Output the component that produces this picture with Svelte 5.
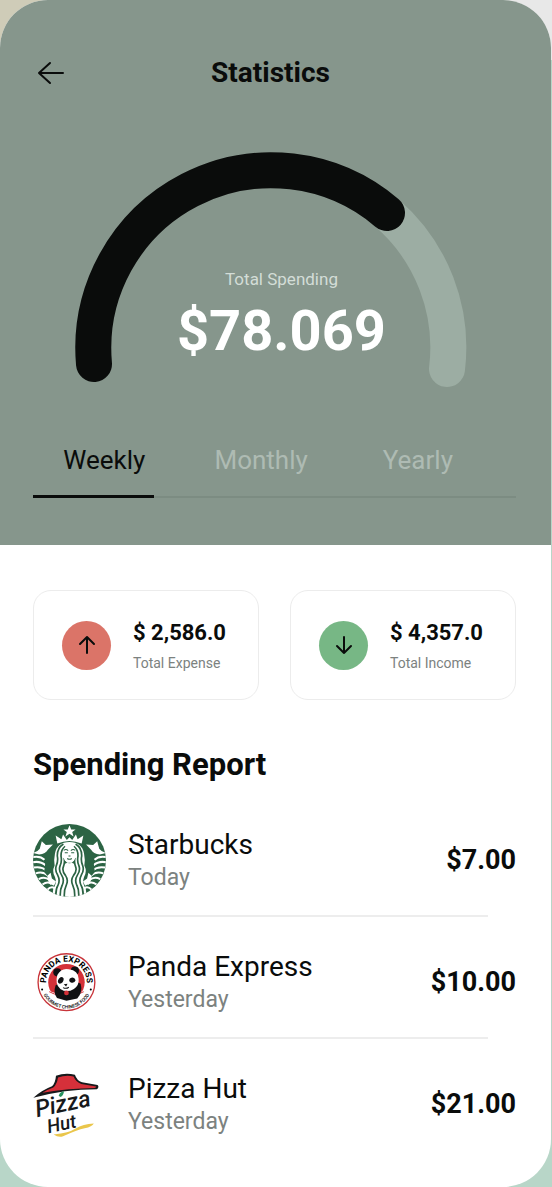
<script>
    let period = $state("Weekly");

    const periods = ["Weekly", "Monthly", "Yearly"];

    const totals = [
        { label: "Total Expense", amount: "$ 2,586.0", type: "expense" },
        { label: "Total Income", amount: "$ 4,357.0", type: "income" },
    ];

    const spendings = [
        { name: "Starbucks", day: "Today", price: "$7.00" },
        { name: "Panda Express", day: "Yesterday", price: "$10.00" },
        { name: "Pizza Hut", day: "Yesterday", price: "$21.00" },
    ];
</script>

{#snippet starbucks()}
    <svg class="logo" viewBox="0 0 216 216" aria-hidden="true">
        <defs>
            <clipPath id="siren-clip"><circle cx="108" cy="108" r="108" /></clipPath>
        </defs>
        <g clip-path="url(#siren-clip)">
            <rect width="216" height="216" fill="#2c6444" />
            <g fill="#fff">
                <path d="M108 4l5 12h13l-10 8 4 13-12-8-12 8 4-13-10-8h13z" />
                <path d="M67 34l17 11 5-14 11 16 8-8 8 8 11-16 5 14 17-11-5 24q-37-15-72 0z" />
                <path d="M26 51l12 11 21-1-15 15q-6 12-26 14l-18-4q14-4 20-13zM190 51l-12 11-21-1 15 15q6 12 26 14l18-4q-14-4-20-13z" />
            </g>
            <!-- split tails -->
            <g fill="none" stroke="#fff" stroke-width="6">
                <path d="M0 98q22-4 34 8M0 113q22-4 37 9M2 129q22-5 39 9M8 146q21-7 37 7M17 163q18-9 32 3M28 179q16-11 27-1M42 195q12-13 22-5M216 98q-22-4-34 8M216 113q-22-4-37 9M214 129q-22-5-39 9M208 146q-21-7-37 7M199 163q-18-9-32 3M188 179q-16-11-27-1M174 195q-12-13-22-5" />
            </g>
            <path d="M35 94q3 24-2 48l24 28 7-22-9-24zM181 94q-3 24 2 48l-24 28-7-22 9-24z" fill="#2c6444" />
            <path d="M42 154l10-10 4 17 12 9-6 13-15-8zM174 154l-10-10-4 17-12 9 6 13 15-8z" fill="#fff" />
            <!-- hair and body -->
            <path d="M108 53q-37 1-43 34-4 19-1 36-9 18 1 34 7 18-5 34l-3 25h102l-3-25q-12-16-5-34 10-16 1-34 3-17-1-36-6-33-43-34z" fill="#fff" />
            <g fill="none" stroke="#2c6444" stroke-width="5">
                <path d="M90 59q-19 12-18 36 3 14-3 28-5 15 4 28 8 15 1 30-8 13-6 38M95 66q-13 10-12 30 3 15-3 28-5 14 5 28 9 14 1 30-7 13-5 38M92 100q3 14-2 26-5 12 6 26 10 14 2 30-7 14-5 38" />
                <path d="M126 59q19 12 18 36-3 14 3 28 5 15-4 28-8 15-1 30 8 13 6 38M121 66q13 10 12 30-3 15 3 28 5 14-5 28-9 14-1 30 7 13 5 38M124 100q-3 14 2 26 5 12-6 26-10 14-2 30 7 14 5 38" />
            </g>
            <ellipse cx="108" cy="89" rx="20" ry="26" fill="#fff" />
            <path d="M93 107q15 18 30 0l2 12q-17-8-34 0z" fill="#2c6444" />
            <path d="M91 78q7-5 13 1M112 79q6-6 13-1M94 85h9M113 85h9M105 95h6M101 102q7 5 14 0" fill="none" stroke="#2c6444" stroke-width="3" />
        </g>
    </svg>
{/snippet}

{#snippet panda()}
    <svg class="logo" viewBox="9 2 216 216" aria-hidden="true">
        <defs>
            <path id="panda-top" d="M52 130A60 60 0 1 1 164 130" />
            <path id="panda-bottom" d="M31 110a77 77 0 0 0 154 0" />
        </defs>
        <circle cx="108" cy="109" r="84" fill="#fff" stroke="#c8343a" stroke-width="4" />
        <circle cx="108" cy="109" r="54" fill="#d43138" />
        <path d="M52 132q56 28 112 0-12 33-56 35-44-2-56-35z" fill="#fff" />
        <path d="M57 137q51 28 102 0" fill="none" stroke="#d43138" stroke-width="3" />
        <path d="M76 118q-8 22 4 38l28 8 32-7q17-17 10-43l-30-16z" fill="#101113" />
        <circle cx="81" cy="80" r="12" fill="#101113" />
        <circle cx="133" cy="75" r="12" fill="#101113" />
        <path d="M81 88q12-22 34-17 28 4 29 28 2 20-14 30-21 13-40 0-17-13-9-41z" fill="#fff" />
        <path d="M86 98q10-9 14 1-1 13-12 15-10-5-2-16zM118 98q13-7 17 5-4 11-14 7-8-5-3-12z" fill="#101113" />
        <path d="M100 115l11-1-4 8z" fill="#101113" />
        <path d="M98 125q9 5 17-1" fill="none" stroke="#101113" stroke-width="3" />
        <circle cx="108" cy="141" r="7" fill="#d43138" />
        <circle cx="36" cy="131" r="3" />
        <circle cx="180" cy="131" r="3" />
        <text class="ring-name"><textPath href="#panda-top" startOffset="50%">PANDA EXPRESS</textPath></text>
        <text class="ring-sub"><textPath href="#panda-bottom" startOffset="50%">GOURMET CHINESE FOOD</textPath></text>
    </svg>
{/snippet}

{#snippet pizza()}
    <svg class="logo" viewBox="0 0 216 216" aria-hidden="true">
        <path d="M1 88q24-22 55-34 10-8 12-31 27-10 56-3 6 18 21 22l46 8q6 6-2 13-95 0-188 25z" fill="#17191b" />
        <path d="M28 73q16-9 32-15 11-10 14-30 23-8 46-3 7 17 23 22l44 8q2 3-5 4-76 1-154 14z" fill="#d6303a" />
        <path d="M61 197q46-5 65-18 22-13 54-15-5 10-27 14-22 4-64 24-13 5-28-5z" fill="#eac64b" />
        <text class="hut-text" transform="translate(12 146) rotate(-12)">Pizza</text>
        <text class="hut-text small" transform="translate(46 193) rotate(-12)">Hut</text>
        <path d="M76 82q4-12 16-13-2 13-11 17z" fill="#27935f" />
    </svg>
{/snippet}

<div class="screen">
    <main class="phone">
        <section class="overview">
            <header class="topbar">
                <button class="back-btn" aria-label="Back">
                    <svg viewBox="0 0 28 24" width="28" height="24">
                        <path d="M13 2L2 12l11 10M2 12h24" />
                    </svg>
                </button>
                <h1>Statistics</h1>
            </header>

            <div class="gauge">
                <svg class="gauge-arc" viewBox="0 0 392 236" aria-hidden="true">
                    <path class="track" d="M312 60A178 178 0 0 1 372 216" />
                    <path class="fill" d="M19 211A178 178 0 0 1 312 60" />
                </svg>
                <div class="gauge-text">
                    <span class="gauge-label">Total Spending</span>
                    <strong>$78.069</strong>
                </div>
            </div>

            <div class="tabs" role="tablist">
                {#each periods as item}
                    <button
                        role="tab"
                        class="tab"
                        class:active={period === item}
                        aria-selected={period === item}
                        onclick={() => (period = item)}
                    >
                        {item}
                    </button>
                {/each}
            </div>
        </section>

        <section class="totals">
            {#each totals as total}
                <div class="total-card">
                    <span class="badge {total.type}">
                        <svg viewBox="0 0 18 20" width="18" height="20" aria-hidden="true">
                            {#if total.type === "expense"}
                                <path d="M9 18V2M2 9l7-7 7 7" />
                            {:else}
                                <path d="M9 2v16M2 11l7 7 7-7" />
                            {/if}
                        </svg>
                    </span>
                    <div class="total-text">
                        <strong>{total.amount}</strong>
                        <span>{total.label}</span>
                    </div>
                </div>
            {/each}
        </section>

        <section class="report">
            <h2>Spending Report</h2>
            <ul>
                {#each spendings as item}
                    <li>
                        {#if item.name === "Starbucks"}
                            {@render starbucks()}
                        {:else if item.name === "Panda Express"}
                            {@render panda()}
                        {:else}
                            {@render pizza()}
                        {/if}
                        <div class="item-text">
                            <span class="name">{item.name}</span>
                            <span class="day">{item.day}</span>
                        </div>
                        <strong class="price">{item.price}</strong>
                    </li>
                {/each}
            </ul>
        </section>
    </main>
</div>

<style>
    :global(body) {
        background: #b8d6c8;
    }

    .screen {
        padding-right: 1px;
        background: linear-gradient(90deg, #cfccb8 50%, #e8e8e8 50%) top / 100% 60px no-repeat;
        font-family: Roboto, "Noto Sans", sans-serif;
        color: #0a0c0b;
    }

    .phone {
        background: white;
        border-radius: 48px;
        overflow: hidden;
    }

    button {
        padding: 0;
        border: none;
        background: none;
        font: inherit;
        cursor: pointer;
    }

    h1,
    h2,
    ul {
        margin: 0;
        padding: 0;
    }

    .overview {
        padding: 52px 35px 47px 33px;
        background: #86968c;
    }

    .topbar {
        display: grid;
        grid-template-columns: 36px 1fr 44px;
        align-items: center;
        height: 41px;
    }

    .back-btn {
        display: flex;
        padding-left: 4px;
    }

    .back-btn path,
    .badge path {
        fill: none;
        stroke: #0a0c0b;
        stroke-width: 2;
        stroke-linecap: round;
        stroke-linejoin: round;
    }

    h1 {
        font-size: 28px;
        line-height: 40px;
        font-weight: 700;
        text-align: center;
    }

    .gauge {
        display: grid;
        justify-items: center;
        padding-right: 8px;
        margin-top: 60px;
    }

    .gauge > * {
        grid-area: 1 / 1;
    }

    .gauge-arc {
        width: 100%;
        max-width: 392px;
        overflow: visible;
    }

    .gauge-arc path {
        fill: none;
        stroke-width: 36;
        stroke-linecap: round;
    }

    .gauge-arc .track {
        stroke: #9cada3;
    }

    .gauge-arc .fill {
        stroke: #0a0c0b;
    }

    .gauge-text {
        display: flex;
        flex-direction: column;
        align-items: center;
        align-self: end;
        padding: 0 0 18px 22px;
        color: white;
    }

    .gauge-label {
        font-size: 17px;
        line-height: 24px;
        color: #d3ddd7;
    }

    .gauge-text strong {
        font-size: 56px;
        line-height: 80px;
    }

    .tabs {
        display: flex;
        gap: 36px;
        margin-top: 47px;
        border-bottom: 2px solid #7c8c82;
    }

    .tab {
        width: 25%;
        height: 62px;
        margin-bottom: -2px;
        padding: 0 0 12px 22px;
        border-bottom: 3px solid transparent;
        font-size: 26px;
        line-height: 32px;
        color: #aebbb3;
    }

    .tab.active {
        border-color: #0a0c0b;
        color: #0a0c0b;
    }

    .totals {
        display: grid;
        grid-template-columns: 1fr 1fr;
        gap: 31px;
        padding: 45px 35px 0 33px;
    }

    .total-card {
        display: flex;
        align-items: center;
        gap: 22px;
        height: 108px;
        padding-left: 28px;
        border: 1px solid #ececec;
        border-radius: 18px;
    }

    .badge {
        display: grid;
        place-items: center;
        width: 49px;
        height: 49px;
        border-radius: 50%;
    }

    .expense {
        background: #db7468;
    }

    .income {
        background: #77b785;
    }

    .total-text {
        display: flex;
        flex-direction: column;
        padding-top: 4px;
    }

    .total-text strong {
        font-size: 22px;
        line-height: 32px;
    }

    .total-text span {
        font-size: 14px;
        line-height: 28px;
        color: #7c827f;
    }

    .report {
        padding: 45px 35px 26px 33px;
    }

    h2 {
        font-size: 31px;
        line-height: 40px;
        font-weight: 700;
    }

    ul {
        margin-top: 10px;
        list-style: none;
    }

    li {
        display: grid;
        grid-template-columns: 73px 1fr auto;
        align-items: center;
        column-gap: 22px;
        height: 114px;
        padding-top: 8px;
        background: linear-gradient(#ededed, #ededed) left bottom / calc(100% - 28px) 2px no-repeat;
    }

    li:last-child {
        background: none;
    }

    .logo {
        width: 73px;
        height: 73px;
    }

    .item-text {
        display: flex;
        flex-direction: column;
        padding-top: 2px;
    }

    .name {
        font-size: 28px;
        line-height: 34px;
    }

    .day {
        font-size: 23px;
        line-height: 32px;
        color: #7c827f;
    }

    .price {
        font-size: 27px;
        line-height: 32px;
    }

    .ring-name {
        font-size: 25px;
        font-weight: 700;
        text-anchor: middle;
    }

    .ring-sub {
        font-size: 14px;
        font-weight: 500;
        text-anchor: middle;
    }

    .hut-text {
        font-size: 70px;
        font-style: italic;
        font-weight: 500;
        fill: #17191b;
    }

    .hut-text.small {
        font-size: 56px;
    }
</style>
